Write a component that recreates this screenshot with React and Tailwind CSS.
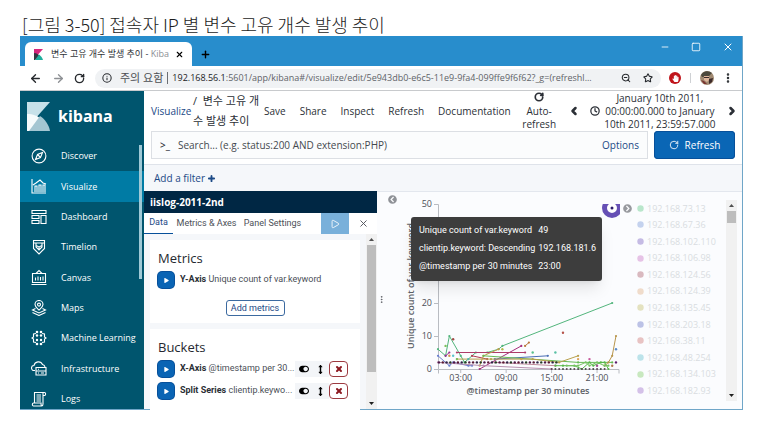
import React from "react";
import { ArrowLeft, ArrowRight, RotateCw, Info, ZoomOut, Star, MoreVertical, X, Plus, Minus, Square, ChevronLeft, ChevronRight, Clock, Play } from "lucide-react";
import { FaPlay, FaToggleOn, FaArrowsAltV, FaChevronCircleLeft, FaChevronCircleRight, FaHandPaper } from "react-icons/fa";

const Glyph = ({ children }) => (
  <svg width="16" height="16" viewBox="0 0 16 16" fill="none" stroke="currentColor" strokeWidth="1.1" aria-hidden="true">
    {children}
  </svg>
);

const NAV = [
  ["Discover", <Glyph><circle cx="8" cy="8" r="6.9" /><path d="M11.5 4.5 9.5 9.5 4.5 11.5 6.5 6.5zM7 7l2 2" /></Glyph>],
  ["Visualize", <Glyph><path d="M1 1v14h14M4 14V8h2v6M8 14V7h2v7M12 14V7h2v7M2 7l3-2 4-3 3 3 3 1" /></Glyph>],
  ["Dashboard", <Glyph><path d="M1 1.5h14v3H1zM1 6.5h7v3H1zM1 11.5h7v3H1zM10 6.5h5v8h-5z" /></Glyph>],
  ["Timelion", <Glyph><path d="M2.5 1.5h11v8L8 15 2.5 9.5zM2.5 4h11M5 4v4l3 3 3-3V4M5 6.5l3 1.5 3-1.5M8 8v3" /></Glyph>],
  ["Canvas", <Glyph><path d="M1.5 4.5h13v9h-13zM.5 15.5h15M5 4.5l3-3 3 3M4.5 11.5v-3M7 11.5v-4M9.5 11.5V8M12 11.5v-4" /></Glyph>],
  ["Maps", <Glyph><path d="M8 10C5.5 7.5 4 6.5 4 4.5a4 4 0 0 1 8 0C12 6.5 10.5 7.5 8 10z" /><circle cx="8" cy="4.6" r="1.5" /><path d="M4.5 8.5 1.5 10 8 13l6.5-3-3-1.5M1.5 12.5l6.5 3 6.5-3" /></Glyph>],
  ["Machine Learning", <Glyph><path d="M5 3.5 2.5 4v3L1 8l1.500 1v3L5 12.500M11 3.500l2.500.5v3L15 8l-1.500 1v3l-2.500.5" /><g fill="currentColor" stroke="none"><circle cx="6" cy="2" r="1.3" /><circle cx="10" cy="2" r="1.3" /><circle cx="6" cy="5.5" r="1.2" /><circle cx="10" cy="5.5" r="1.2" /><circle cx="6" cy="10" r="1.2" /><circle cx="10" cy="10" r="1.2" /><circle cx="6" cy="14" r="1.3" /><circle cx="10" cy="14" r="1.3" /></g></Glyph>],
  ["Infrastructure", <Glyph><path d="M4 10.5H3a2.5 2.5 0 0 1 0-5 4.5 4.5 0 0 1 8.5-1A3 3 0 0 1 14 7M5 7.5h10v3.5H5zM5 11h10v4H5zM7 9.2h1M7 13h1M10 13h3" /></Glyph>],
  ["Logs", <Glyph><path d="M3.5 12V1.5h10c1.5 0 1.5 3 0 3h-1M12 2v11c0 2-1 2-1.5 2h-8c-1.5 0-1.5-3 0-3H10c0 1 0 3 1 3M5.5 4h4.5M5.5 6h4.5M5.5 8h4.5M5.5 10h4.5" /></Glyph>],
];

const LEGEND = [
  ["192.168.73.13", "#b9e6cb"],
  ["192.168.67.36", "#c4d2ee"],
  ["192.168.102.110", "#c5bbe4"],
  ["192.168.106.98", "#e6c3e6"],
  ["192.168.124.56", "#d9b9bf"],
  ["192.168.124.39", "#f0dccb"],
  ["192.168.135.45", "#e4e2c0"],
  ["192.168.203.18", "#bcc2e6"],
  ["192.168.38.11", "#e8c3c3"],
  ["192.168.48.254", "#bce3ea"],
  ["192.168.134.103", "#c8e8bf"],
  ["192.168.182.93", "#d4c1e8"],
];

// Points are [half-hour slot, unique count].
const SERIES = [
  ["#52b57c", [[0, 6], [2, 4], [3, 10], [6, 4], [7, 2], [10, 5], [13, 5], [16, 6], [17, 7], [46, 20]]],
  ["#6a7fd0", [[0, 4], [3, 1], [4, 2], [8, 1], [9, 1]]],
  ["#9c2c95", [[2, 4], [3, 5]]],
  ["#a62d7c", [[11, 0], [22, 7]]],
  ["#ad3c68", [[5, 5], [23, 5]]],
  ["#b03a4c", [[9, 4], [13, 3]]],
  ["#b9773a", [[23, 7], [24, 8]]],
  ["#c0a050", [[11, 1], [12, 4], [16, 6]]],
  ["#4b6fb5", [[15, 3], [29, 4]]],
  ["#66bb55", [[12, 4], [37, 2], [46, 2]]],
  ["#b8a04c", [[5, 3], [14, 3], [25, 3], [32, 2], [37, 4]]],
  ["#b8954c", [[44, 1], [45, 2], [46, 4], [47, 10]]],
  ["#b78fae", [[0, 2], [12, 1], [30, 0]]],
  ["#c08c9c", [[15, 2], [31, 1]]],
  ["#58b84a", [[31, 1], [33, 1], [36, 1], [38, 0], [40, 2], [41, 1], [43, 2], [44, 2], [45, 0]]],
  ["#77c462", [[34, 1], [37, 1], [39, 2], [40, 1], [42, 2], [44, 1], [45, 1]]],
];

const DOTS = [
  ["#7cc05d", 2, 7], ["#a24b48", 4, 9], ["#d49a4c", 3, 4], ["#5cc4cc", 4, 4], ["#7cc05d", 5, 3],
  ["#b5524a", 33, 11], ["#58c08c", 25, 5], ["#58c0a4", 31, 5], ["#b4b94c", 17, 6], ["#c85a9c", 40, 3],
  ["#5b8ac8", 47, 6], ["#5c1c6c", 47, 2], ["#b07848", 46, 1], ["#c8a84c", 22, 3], ["#4cb8b0", 8, 3],
  ["#a04c90", 42, 1], ["#e0a45c", 37, 3],
];

const slotX = (slot) => slot * 3.787;
const countY = (value) => 165 - value * 3.3;

function LineChart() {
  return (
    <svg width="226" height="218" viewBox="0 0 226 218" className="block shrink-0" role="img" aria-label="Unique count of var.keyword per 30 minutes">
      <text transform="translate(13 94) rotate(-90)" textAnchor="middle" fontSize="9" fontWeight="600" fill="#5c5f66">Unique count of var.keyword</text>
      <g transform="translate(37 12)" fontSize="9" fill="#4c4f57">
        <path d="M-4 .5H.5V165.5H181v4M.5 165.5v4" fill="none" stroke="#b9bcc2" />
        {[0, 10, 20, 30, 40, 50].map((v) => (
          <g key={v}>
            <path d={`M-4 ${countY(v) + 0.5}H0`} stroke="#b9bcc2" />
            <text x="-6" y={countY(v) + 3} textAnchor="end">{v}</text>
          </g>
        ))}
        {["03:00", "09:00", "15:00", "21:00"].map((label, i) => (
          <g key={label}>
            <path d={`M${slotX(6 + i * 12)} 165v4`} stroke="#b9bcc2" />
            <text x={slotX(6 + i * 12)} y="177" textAnchor="middle">{label}</text>
          </g>
        ))}
        {SERIES.map(([color, points], i) => (
          <g key={i} fill={color}>
            <polyline points={points.map(([s, v]) => `${slotX(s)},${countY(v)}`).join(" ")} fill="none" stroke={color} strokeWidth="1" />
            {points.map(([s, v]) => <circle key={s} cx={slotX(s)} cy={countY(v)} r="1.1" />)}
          </g>
        ))}
        {Array.from({ length: 32 }, (_, i) => (
          <circle key={i} cx={slotX(i) + 1} cy={countY(2)} r="1.2" fill={["#4d1747", "#571733", "#2c2145", "#233b25"][i % 4]} />
        ))}
        {Array.from({ length: 15 }, (_, i) => (
          <circle key={i} cx={slotX(i + 30)} cy={countY(0)} r="1" fill={["#5a4450", "#454a45"][i % 2]} />
        ))}
        {DOTS.map(([color, s, v]) => <circle key={`${s}-${v}`} cx={slotX(s)} cy={countY(v)} r="1.2" fill={color} />)}
        <clipPath id="plot"><rect width="182" height="165" /></clipPath>
        <g clipPath="url(#plot)">
          <circle cx="174" cy="4" r="7.5" fill="#fff" stroke="#6650b5" strokeWidth="5" />
          <circle cx="174" cy="4" r="1.5" fill="#2c1c6c" />
        </g>
      </g>
      <text x="127" y="202" textAnchor="middle" fontSize="9" fontWeight="600" fill="#5c5f66">@timestamp per 30 minutes</text>
    </svg>
  );
}

function ExpandButton({ label }) {
  return (
    <button aria-label={label} className="flex size-4 shrink-0 items-center justify-center rounded-sm bg-[#0a64b4] text-white ring-1 ring-[#07509a]">
      <FaPlay size={5} />
    </button>
  );
}

function BucketRow({ name, detail }) {
  return (
    <div className="flex h-[22px] items-center gap-[6px] pr-1">
      <ExpandButton label={`Expand ${name}`} />
      <p className="min-w-0 flex-1 whitespace-nowrap"><b className="font-bold text-[#2b2f36]">{name}</b> {detail}</p>
      <div className="flex h-4 items-center">
        <button aria-label={`Toggle ${name}`} className="flex h-4 w-[17px] items-center justify-center bg-[#f3f5f8] text-black"><FaToggleOn size={10} /></button>
        <button aria-label={`Move ${name}`} className="flex h-4 w-[17px] items-center justify-center bg-[#f3f5f8] text-black"><FaArrowsAltV size={9} /></button>
        <button aria-label={`Remove ${name}`} className="flex h-4 w-[19px] items-center justify-center rounded-sm border border-[#9c3a40] text-[#8c1820]"><X size={8} strokeWidth={6} /></button>
      </div>
    </div>
  );
}

function TabStrip() {
  return (
    <div className="flex h-[30px] items-end bg-[#288dcc] pl-[5px] text-black">
      <div className="flex h-6 w-[167px] items-center rounded-t-md bg-white pr-2 pl-[9px]">
        <svg width="9" height="11" viewBox="0 0 9 11" aria-hidden="true">
          <path d="M0 0h9L0 10z" fill="#d6277c" />
          <path d="M0 4c3 0 5 2 6 3L1 11H0z" fill="#343741" />
          <path d="M5 5.5C7 7 8.5 9 9 11H1z" fill="#1fae9d" />
        </svg>
        <span className="ml-2 flex-1 overflow-hidden text-[9px] whitespace-nowrap text-[#303337]">변수 고유 개수 발생 추이 - <span className="text-[#8c8f94]">Kiba</span></span>
        <button aria-label="Close tab"><X size={9} strokeWidth={3} /></button>
      </div>
      <button aria-label="New tab" className="ml-2 pb-[6px]"><Plus size={11} strokeWidth={3} /></button>
      <div className="ml-auto flex items-center gap-[21px] pr-2 pb-[13px] text-white">
        <button aria-label="Minimize"><Minus size={10} /></button>
        <button aria-label="Maximize"><Square size={10} /></button>
        <button aria-label="Close window"><X size={12} /></button>
      </div>
    </div>
  );
}

function AddressBar() {
  return (
    <div className="flex h-[25px] items-center border-b border-[#c8cacd] bg-white pl-2 text-[#26292d]">
      <button aria-label="Back" className="w-[23px] pl-[1px]"><ArrowLeft size={13} strokeWidth={2.5} /></button>
      <button aria-label="Forward" className="w-[23px] pl-[1px] text-[#8d9094]"><ArrowRight size={13} strokeWidth={2.5} /></button>
      <button aria-label="Reload" className="w-[21px]"><RotateCw size={11} strokeWidth={3} /></button>
      <div className="flex h-[19px] min-w-0 flex-1 items-center rounded-full bg-[#f0f2f4] pr-2 pl-[7px]">
        <Info size={10} strokeWidth={2.5} className="shrink-0" />
        <span className="ml-2 text-[11px] whitespace-nowrap text-[#4b4e52]">주의 요함</span>
        <span className="mx-[4px] h-3 w-px bg-[#6b6e72]" />
        <span className="min-w-0 flex-1 truncate font-['Open_Sans'] text-[9px] text-[#5f6368]"><span className="text-[#202124]">192.168.56.1</span>:5601/app/kibana#/visualize/edit/5e943db0-e6c5-11e9-9fa4-099ffe9f6f62?_g=(refreshl...</span>
        <button aria-label="Zoom" className="ml-2"><ZoomOut size={10} strokeWidth={2.5} /></button>
        <button aria-label="Bookmark" className="ml-3"><Star size={10} strokeWidth={2.5} /></button>
      </div>
      <button aria-label="Ad blocker" className="ml-2 flex size-3 items-center justify-center rounded-full bg-[#c0141b] text-white"><FaHandPaper size={7} /></button>
      <span className="mx-[9px] h-[10px] w-px bg-[#cfd1d4]" />
      <button aria-label="Profile">
        <svg width="14" height="14" viewBox="0 0 14 14" aria-hidden="true">
          <circle cx="7" cy="7" r="7" fill="#a18a72" />
          <path d="M1 4a7 7 0 0 1 11-2L9 5 2 6z" fill="#4d4a3e" />
          <path d="M4 5h5v4L7 11 4 9z" fill="#e0b79c" />
          <path d="M4 6h5v1H4zM9 8l4-1-1 4-3 2z" fill="#3c2a2a" />
          <path d="M1 9l3 1 3 3-3 0z" fill="#7a3430" />
        </svg>
      </button>
      <button aria-label="Browser menu" className="mr-2 ml-2"><MoreVertical size={12} strokeWidth={3} /></button>
    </div>
  );
}

function Sidebar() {
  return (
    <aside className="relative w-[124px] shrink-0 overflow-hidden bg-[#00556e] text-white">
      <div className="flex h-[50px] items-center gap-2 pl-[7px]">
        <svg width="23" height="29" viewBox="0 0 23 29" aria-hidden="true">
          <path d="M0 0h23L0 26z" fill="#c7e1e9" />
          <path d="M0 12c6 0 11 2 14 5L4 29H0z" fill="#f6fbfc" />
          <path d="M13 14c5 3 9 9 10 15H2z" fill="#a4c6d2" />
        </svg>
        <span className="text-[16px] font-bold">kibana</span>
      </div>
      <nav className="grid h-[273px] grid-rows-9 text-[9px] font-medium">
        {NAV.map(([name, icon]) => (
          <a key={name} href="#" className={name === "Visualize" ? "flex items-center gap-[14px] bg-[#007ba4] pl-[11px] whitespace-nowrap" : "flex items-center gap-[14px] pl-[11px] whitespace-nowrap"}>
            {icon}
            {name}
          </a>
        ))}
      </nav>
      <span className="absolute top-[54px] right-[2px] h-[134px] w-[3px] bg-[#9fc9d6]" />
    </aside>
  );
}

function TopMenu() {
  return (
    <header className="flex h-10 items-center bg-white pl-[7px] text-[10px] leading-[13px] whitespace-nowrap text-[#2b2f36]">
      <a href="#" className="w-[42px] text-[#1c4a86]">Visualize</a>
      <span className="w-[71px] text-[11px] leading-[20px] whitespace-normal">/&nbsp; 변수 고유 개수 발생 추이</span>
      <nav className="flex flex-1 items-center justify-between">
        <div className="flex gap-[14px]">
          <a href="#">Save</a>
          <a href="#">Share</a>
          <a href="#">Inspect</a>
          <a href="#">Refresh</a>
          <a href="#">Documentation</a>
        </div>
        <button className="flex w-9 flex-col items-center text-center"><RotateCw size={10} strokeWidth={4} className="mb-[3px]" />Auto-<br />refresh</button>
        <button aria-label="Earlier"><ChevronLeft size={12} strokeWidth={5} /></button>
        <button className="flex items-center gap-1 text-center"><Clock size={10} strokeWidth={3} /><span>January 10th 2011,<br />00:00:00.000 to January<br />10th 2011, 23:59:57.000</span></button>
        <button aria-label="Later" className="mr-1"><ChevronRight size={12} strokeWidth={5} /></button>
      </nav>
    </header>
  );
}

function SearchBar() {
  return (
    <form className="flex h-[33px] items-start gap-[6px] bg-white pr-[7px] pl-[7px] text-[10px]">
      <div className="flex h-7 flex-1 items-center border border-[#dcdfe4] bg-[#fbfcfd] px-2">
        <span className="mr-2 text-[10px] font-semibold text-[#343741]">&gt;_</span>
        <input aria-label="Search" placeholder="Search... (e.g. status:200 AND extension:PHP)" className="min-w-0 flex-1 bg-transparent outline-none placeholder:text-[#45494f]" />
        <button type="button" className="text-[#1c4a86]">Options</button>
      </div>
      <button type="button" className="flex h-7 w-[81px] items-center justify-center gap-[6px] rounded-sm bg-[#0a66b5] text-white ring-1 ring-[#07509a] ring-inset"><RotateCw size={10} />Refresh</button>
    </form>
  );
}

function Editor() {
  return (
    <section className="flex w-[233px] shrink-0 flex-col bg-[#f5f7fa]">
      <h2 className="h-[22px] bg-[#002744] pl-[6px] text-[10px] leading-[22px] font-bold text-white">iislog-2011-2nd</h2>
      <div className="flex h-[21px] items-stretch bg-white font-[Roboto,'Open_Sans',sans-serif] text-[9px] text-[#4b4f57]">
        <button className="w-[29px] border-b border-[#07509a] text-[#1c4a86]">Data</button>
        <button className="w-[67px]">Metrics &amp; Axes</button>
        <button className="w-[65px]">Panel Settings</button>
        <button aria-label="Apply changes" className="ml-auto flex w-7 items-center justify-center bg-[#79b0da] text-white"><Play size={10} /></button>
        <button aria-label="Discard changes" className="flex w-7 items-center justify-center"><X size={11} /></button>
      </div>
      <div className="flex min-h-0 flex-1">
        <div className="flex min-w-0 flex-1 flex-col gap-[6px] pt-[6px] pr-[6px] pl-[6px] font-[Roboto,'Open_Sans',sans-serif] text-[9px] text-[#4b4f57]">
          <div className="h-[83px] shrink-0 bg-white px-2 pt-2">
            <h3 className="font-['Open_Sans'] text-[13px] leading-[20px] text-[#25282f]">Metrics</h3>
            <div className="mt-1 flex h-4 items-center gap-[6px]">
              <ExpandButton label="Expand Y-Axis" />
              <p className="whitespace-nowrap"><b className="font-bold text-[#2b2f36]">Y-Axis</b> Unique count of var.keyword</p>
            </div>
            <button className="mx-auto mt-3 block h-4 w-[59px] rounded-[3px] border border-[#3c6aa0] leading-[14px] whitespace-nowrap text-[#1c4a86]">Add metrics</button>
          </div>
          <div className="bg-white px-2 pt-2">
            <h3 className="font-['Open_Sans'] text-[13px] leading-[20px] text-[#25282f]">Buckets</h3>
            <div className="mt-px">
              <BucketRow name="X-Axis" detail="@timestamp per 30..." />
              <BucketRow name="Split Series" detail="clientip.keywo..." />
            </div>
            <div className="h-4" />
          </div>
        </div>
        <ScrollBar thumb="h-[127px]" />
      </div>
    </section>
  );
}

function ScrollBar({ thumb }) {
  return (
    <div className="flex w-[11px] shrink-0 flex-col items-center bg-[#f1f1f1]">
      <svg width="11" height="11" viewBox="0 0 11 11" aria-hidden="true"><path d="M3 7l2.5-3L8 7z" fill="#505050" /></svg>
      <span className={`w-[9px] bg-[#bdbdbd] ${thumb}`} />
      <svg width="11" height="11" viewBox="0 0 11 11" className="mt-auto" aria-hidden="true"><path d="M3 4l2.5 3L8 4z" fill="#202020" /></svg>
    </div>
  );
}

function Visualization() {
  return (
    <section className="relative flex min-w-0 flex-1 border-t border-[#e3e7ee] bg-[#fbfcfe]">
      <div className="flex w-6 shrink-0 flex-col items-center pt-[3px] text-[#8f9297]">
        <button aria-label="Collapse editor" className="pl-[6px]"><FaChevronCircleLeft size={9} /></button>
        <MoreVertical size={9} strokeWidth={2} className="mt-[91px] mr-4 text-[#505358]" />
      </div>
      <LineChart />
      <ul className="ml-auto grid h-[207px] w-[89px] shrink-0 grid-rows-12 pt-2 text-[9px] text-[#d9dce1]">
        {LEGEND.map(([ip, color]) => (
          <li key={ip} className="flex items-center gap-[3px]">
            <svg width="7" height="7" viewBox="0 0 7 7" aria-hidden="true"><circle cx="3.5" cy="3.5" r="3.2" fill={color} /></svg>
            {ip}
          </li>
        ))}
      </ul>
      <div className="mt-2 mr-[5px] mb-2 flex"><ScrollBar thumb="h-3" /></div>
      <button aria-label="Hide legend" className="absolute top-3 left-[246px] text-[#97999e]"><FaChevronCircleRight size={9} /></button>
      <table className="absolute top-[25px] left-[34px] h-16 w-[191px] border-separate rounded-[3px] bg-[#3d3d3d] px-1 py-[4px] text-left font-[Roboto,'Open_Sans',sans-serif] text-[9px] whitespace-nowrap text-white shadow-lg">
        <tbody>
          <tr><th className="w-[123px] pl-[2px] font-normal">Unique count of var.keyword</th><td>49</td></tr>
          <tr><th className="pl-[2px] font-normal">clientip.keyword: Descending</th><td>192.168.181.6</td></tr>
          <tr><th className="pl-[2px] font-normal">@timestamp per 30 minutes</th><td>23:00</td></tr>
        </tbody>
      </table>
    </section>
  );
}

export default function App() {
  return (
    <main className="min-h-screen bg-white pt-3 pr-[15px] pb-4 pl-5 font-['Open_Sans','Noto_Sans_CJK_KR',sans-serif]">
      <h1 className="h-6 pl-[2px] font-['Noto_Sans_CJK_KR',sans-serif] text-[18px] leading-[24px] font-light whitespace-nowrap text-[#1c1c1c]">[그림 3-50] 접속자 IP 별 변수 고유 개수 발생 추이</h1>
      <div className="flex h-[374px] flex-col border-r border-b border-[#6fa6c8]">
        <TabStrip />
        <AddressBar />
        <div className="flex min-h-0 flex-1">
          <Sidebar />
          <div className="flex min-w-0 flex-1 flex-col">
            <TopMenu />
            <SearchBar />
            <div className="h-[27px] border-t border-[#dfe3ea] bg-[#f5f7fa] pl-[10px] text-[10px] leading-[26px] text-[#1c4a86]">
              <button className="inline-flex items-center gap-[2px]">Add a filter <Plus size={9} strokeWidth={5} /></button>
            </div>
            <div className="flex min-h-0 flex-1">
              <Editor />
              <Visualization />
            </div>
          </div>
        </div>
      </div>
    </main>
  );
}
